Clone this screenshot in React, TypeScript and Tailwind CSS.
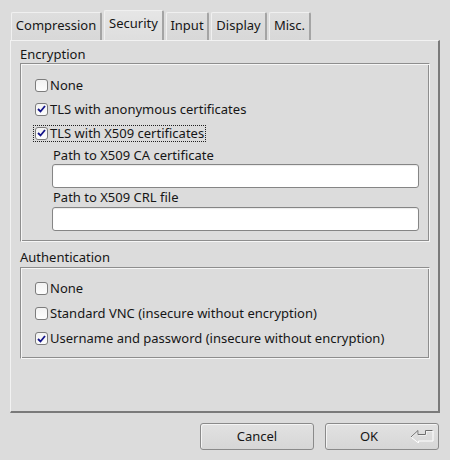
import React from 'react';

const tabs = [
  { label: 'Compression', w: 'w-[91px]' },
  { label: 'Security', w: 'w-[60px]', active: true },
  { label: 'Input', w: 'w-[43px]' },
  { label: 'Display', w: 'w-[56px]' },
  { label: 'Misc.', w: 'w-[42px]' },
];

const CheckBox: React.FC<{ checked?: boolean }> = ({ checked }) => (
  <span className="w-[13px] h-[13px] rounded-[3px] border border-[#7c7c7c] bg-gradient-to-b from-[#f2f2f2] to-[#fdfdfd] flex items-center justify-center shrink-0">
    {checked && (
      <svg width="9" height="8" viewBox="0 0 9 8">
        <path d="M1 4 L3.5 6.5 L8 1" fill="none" stroke="#14148a" strokeWidth="1.8" />
      </svg>
    )}
  </span>
);

const Option: React.FC<{ label: string; checked?: boolean; focus?: boolean; h?: string }> = ({
  label,
  checked,
  focus,
  h = 'h-[24px]',
}) => (
  <div className={`${h} flex items-center`}>
    <div
      className={`flex items-center gap-[2px] h-[17px] pl-[1px] pr-[1px] ${
        focus ? 'border border-dotted border-[#202020]' : 'border border-transparent'
      }`}
    >
      <CheckBox checked={checked} />
      <span className="leading-[15px]">{label}</span>
    </div>
  </div>
);

const GroupBox: React.FC<{ className: string; children: React.ReactNode }> = ({ className, children }) => (
  <div
    className={`w-[410px] border border-t-[#8e8e8e] border-l-[#8e8e8e] border-r-[#f6f6f6] border-b-[#f6f6f6] shadow-[inset_1px_1px_0_#f6f6f6,inset_-1px_-1px_0_#8e8e8e] ${className}`}
  >
    {children}
  </div>
);

const TextField: React.FC = () => (
  <div className="w-[367px] h-[24px] rounded-[3px] border border-[#858585] bg-white shadow-[inset_0_1px_1px_rgba(0,0,0,0.08)]" />
);

const App: React.FC = () => {
  return (
    <div
      className="w-[450px] h-[460px] bg-[#dcdcdc] text-[13px] text-[#161616] overflow-hidden"
      style={{ fontFamily: '"Noto Sans", "Open Sans", sans-serif' }}
    >
      {/* tab bar */}
      <div className="h-[40px] flex items-end gap-[2px] pl-[11px]">
        {tabs.map((t) => (
          <div
            key={t.label}
            className={`${t.w} ${
              t.active
                ? 'h-[30px] bg-gradient-to-b from-[#e6e6e6] to-[#dedede] pb-[4px]'
                : 'h-[28px] bg-gradient-to-b from-[#dedede] to-[#d8d8d8] pb-[1px]'
            } flex items-center justify-center border-t border-l border-t-[#f0f0f0] border-l-[#f0f0f0] border-r-2 border-r-[#a4a4a4] rounded-t-[2px]`}
          >
            {t.label}
          </div>
        ))}
      </div>

      {/* tab page */}
      <div className="ml-[10px] w-[430px] h-[373px] border-t border-l border-t-[#f2f2f2] border-l-[#f2f2f2] border-r-2 border-b-2 border-r-[#7a7a7a] border-b-[#7a7a7a] pl-[9px] flex flex-col">
        <div className="mt-[4px] h-[18px] leading-[18px]">Encryption</div>
        <GroupBox className="h-[179px] pt-[9px] pl-[12px]">
          <Option label="None" />
          <Option label="TLS with anonymous certificates" checked />
          <Option label="TLS with X509 certificates" checked focus />
          <div className="pl-[19px]">
            <div className="mt-[1px] h-[18px] leading-[18px] pl-[1px]">Path to X509 CA certificate</div>
            <TextField />
            <div className="h-[18px] leading-[18px] pl-[1px]">Path to X509 CRL file</div>
            <div className="mt-[1px]">
              <TextField />
            </div>
          </div>
        </GroupBox>

        <div className="mt-[6px] h-[18px] leading-[18px]">Authentication</div>
        <GroupBox className="mt-[1px] h-[92px] pt-[8px] pl-[12px]">
          <Option label="None" h="h-[25px]" />
          <Option label="Standard VNC (insecure without encryption)" h="h-[25px]" />
          <Option label="Username and password (insecure without encryption)" checked h="h-[25px]" />
        </GroupBox>
      </div>

      {/* buttons */}
      <div className="mt-[10px] flex justify-end gap-[11px] pr-[11px]">
        <button className="w-[114px] h-[27px] rounded-[3px] border border-[#8a8a8a] bg-gradient-to-b from-[#e2e2e2] to-[#d6d6d6] shadow-[inset_1px_1px_0_#f4f4f4]">
          Cancel
        </button>
        <button className="relative w-[114px] h-[27px] rounded-[3px] border border-[#8a8a8a] bg-gradient-to-b from-[#e2e2e2] to-[#d6d6d6] shadow-[inset_1px_1px_0_#f4f4f4] pr-[26px]">
          OK
          <svg
            className="absolute right-[4px] top-[5px]"
            width="24"
            height="14"
            viewBox="0 0 24 14"
          >
            <path
              d="M1 8 L8 1.5 L8 5.5 L15.5 5.5 L15.5 1.5 L22.5 1.5 L22.5 11.5 L8 11.5 L8 13.5 Z"
              fill="none"
              stroke="#ffffff"
              strokeWidth="1"
              transform="translate(0.5,0.5)"
            />
            <path
              d="M1 8 L8 1.5 L8 5.5 L15.5 5.5 L15.5 1.5 L22.5 1.5"
              fill="none"
              stroke="#6e6e6e"
              strokeWidth="1"
            />
          </svg>
        </button>
      </div>
    </div>
  );
};

export default App;
